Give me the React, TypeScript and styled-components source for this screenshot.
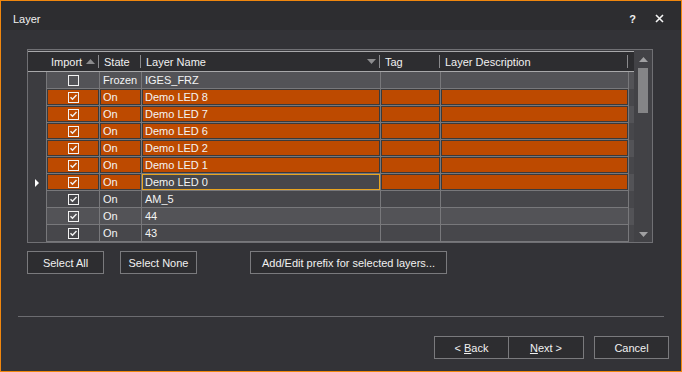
import React from 'react';
import styled, { createGlobalStyle } from 'styled-components';

const Global = createGlobalStyle`
  html, body { margin: 0; padding: 0; background: #333337; }
  body { font-family: "Liberation Sans", Arial, sans-serif; font-size: 11px; color: #f1f1f1; }
  * { box-sizing: border-box; }
`;

const Window = styled.div`
  width: 682px;
  height: 372px;
  border: 1px solid #f0870e;
  background: #333337;
  display: flex;
  flex-direction: column;
  overflow: hidden;
`;

const TitleBar = styled.div`
  height: 29px;
  flex-shrink: 0;
  background: #2d2d30;
  display: flex;
  align-items: center;
  padding: 6px 0 0 12px;
`;

const Title = styled.span`
  flex: 1;
  font-size: 11px;
  color: #f1f1f1;
`;

const TitleActions = styled.div`
  display: flex;
  align-items: center;
  gap: 19px;
  padding-right: 17px;
`;

const HelpGlyph = styled.span`
  font-size: 11px;
  font-weight: bold;
  color: #f1f1f1;
`;

const Body = styled.div`
  flex: 1;
  display: flex;
  flex-direction: column;
`;

const TopSection = styled.div`
  padding: 19px 0 0 26px;
  display: flex;
  flex-direction: column;
`;

const Grid = styled.div`
  width: 626px;
  height: 194px;
  border: 1px solid #707074;
  background: #3c3c40;
  display: flex;
  overflow: hidden;
`;

const Main = styled.div`
  width: 606px;
  display: flex;
  flex-direction: column;
`;

const HeaderRow = styled.div`
  margin-top: 1px;
  height: 21px;
  flex-shrink: 0;
  display: flex;
  background: #2d2d30;
  border-top: 1px solid #a8a8aa;
  border-bottom: 1px solid #a8a8aa;
`;

const HeaderCell = styled.div<{ $w: number; $sep?: boolean }>`
  position: relative;
  width: ${(p) => p.$w}px;
  flex-shrink: 0;
  display: flex;
  align-items: center;
  padding-left: 5px;
  white-space: nowrap;
  color: #f1f1f1;
  &::after {
    content: '';
    display: ${(p) => (p.$sep ? 'block' : 'none')};
    position: absolute;
    right: 0;
    top: 3px;
    bottom: 3px;
    width: 1px;
    background: #8a8a8d;
  }
`;

const HeaderArrow = styled.svg`
  margin-left: auto;
  margin-right: 4px;
  flex-shrink: 0;
`;

const Rows = styled.div`
  display: flex;
  flex-direction: column;
`;

const Row = styled.div<{ $alt: boolean }>`
  height: 17px;
  flex-shrink: 0;
  display: flex;
  background: ${(p) => (p.$alt ? '#47474b' : '#535357')};
`;

const RowHeader = styled.div`
  width: 19px;
  flex-shrink: 0;
  background: #3c3c40;
  border-right: 1px solid #78787b;
  display: flex;
  align-items: center;
  padding-left: 7px;
`;

const Cell = styled.div<{ $w: number; $sel?: boolean; $current?: boolean; $center?: boolean }>`
  width: ${(p) => p.$w}px;
  flex-shrink: 0;
  border-right: 1px solid #78787b;
  border-bottom: 1px solid #78787b;
  padding: 1px 3px 0;
  line-height: 15px;
  white-space: nowrap;
  overflow: hidden;
  color: #f4f4f4;
  display: flex;
  align-items: center;
  justify-content: ${(p) => (p.$center ? 'center' : 'flex-start')};
  background: ${(p) => (p.$current ? '#47474b' : p.$sel ? '#bd4a00' : 'transparent')};
  box-shadow: ${(p) =>
    p.$current ? 'inset 0 0 0 1px #e8a420' : p.$sel ? 'inset 0 0 0 1px #3a3a3c' : 'none'};
`;

const Scrollbar = styled.div`
  width: 18px;
  flex-shrink: 0;
  background: #424246;
  display: flex;
  flex-direction: column;
  align-items: center;
  padding: 7px 0 5px;
`;

const Thumb = styled.div`
  width: 10px;
  height: 45px;
  margin-top: 6px;
  background: #858587;
`;

const Spacer = styled.div`
  flex: 1;
`;

const ButtonRow = styled.div`
  display: flex;
  margin-top: 8px;
`;

const Button = styled.button<{ $w: number; $ml?: number }>`
  width: ${(p) => p.$w}px;
  height: 23px;
  margin-left: ${(p) => p.$ml ?? 0}px;
  padding: 0;
  border: 1px solid #7a7a7d;
  background: #2d2d30;
  color: #f1f1f1;
  font-family: "Liberation Sans", Arial, sans-serif;
  font-size: 11px;
  flex-shrink: 0;
`;

const Separator = styled.div`
  margin: 42px 17px 0;
  height: 1px;
  background: #6c6c70;
`;

const Footer = styled.div`
  display: flex;
  justify-content: flex-end;
  margin-top: 19px;
  padding-right: 12px;
`;

const CheckBox: React.FC<{ checked: boolean }> = ({ checked }) => (
  <svg width="11" height="11" viewBox="0 0 11 11">
    <rect x="0.5" y="0.5" width="10" height="10" fill="none" stroke="#f2f2f2" strokeWidth="1" />
    {checked && (
      <polyline points="2.5,5.2 4.5,7.3 8.5,3" fill="none" stroke="#f2f2f2" strokeWidth="1.4" />
    )}
  </svg>
);

type RowData = { checked: boolean; state: string; name: string; sel: boolean; current?: boolean };

const rows: RowData[] = [
  { checked: false, state: 'Frozen', name: 'IGES_FRZ', sel: false },
  { checked: true, state: 'On', name: 'Demo LED 8', sel: true },
  { checked: true, state: 'On', name: 'Demo LED 7', sel: true },
  { checked: true, state: 'On', name: 'Demo LED 6', sel: true },
  { checked: true, state: 'On', name: 'Demo LED 2', sel: true },
  { checked: true, state: 'On', name: 'Demo LED 1', sel: true },
  { checked: true, state: 'On', name: 'Demo LED 0', sel: true, current: true },
  { checked: true, state: 'On', name: 'AM_5', sel: false },
  { checked: true, state: 'On', name: '44', sel: false },
  { checked: true, state: 'On', name: '43', sel: false },
];

export default function App() {
  return (
    <>
      <Global />
      <Window>
        <TitleBar>
          <Title>Layer</Title>
          <TitleActions>
            <HelpGlyph>?</HelpGlyph>
            <svg width="9" height="9" viewBox="0 0 9 9">
              <path d="M1 1 L8 8 M8 1 L1 8" stroke="#f4f4f4" strokeWidth="1.6" />
            </svg>
          </TitleActions>
        </TitleBar>
        <Body>
          <TopSection>
            <Grid>
              <Main>
                <HeaderRow>
                  <HeaderCell $w={18} />
                  <HeaderCell $w={53} $sep>
                    Import
                    <HeaderArrow width="9" height="5" viewBox="0 0 9 5">
                      <polygon points="0,5 4.5,0 9,5" fill="#8c8c8e" />
                    </HeaderArrow>
                  </HeaderCell>
                  <HeaderCell $w={42} $sep>State</HeaderCell>
                  <HeaderCell $w={239} $sep>
                    Layer Name
                    <HeaderArrow width="9" height="5" viewBox="0 0 9 5">
                      <polygon points="0,0 9,0 4.5,5" fill="#8c8c8e" />
                    </HeaderArrow>
                  </HeaderCell>
                  <HeaderCell $w={60} $sep>Tag</HeaderCell>
                  <HeaderCell $w={188} $sep>Layer Description</HeaderCell>
                </HeaderRow>
                <Rows>
                  {rows.map((r, i) => (
                    <Row key={i} $alt={i % 2 === 1}>
                      <RowHeader>
                        {r.current && (
                          <svg width="4" height="8" viewBox="0 0 4 8">
                            <polygon points="0,0 4,4 0,8" fill="#ffffff" />
                          </svg>
                        )}
                      </RowHeader>
                      <Cell $w={53} $sel={r.sel} $center>
                        <CheckBox checked={r.checked} />
                      </Cell>
                      <Cell $w={42} $sel={r.sel}>{r.state}</Cell>
                      <Cell $w={239} $sel={r.sel} $current={r.current}>{r.name}</Cell>
                      <Cell $w={60} $sel={r.sel} />
                      <Cell $w={188} $sel={r.sel} />
                    </Row>
                  ))}
                </Rows>
              </Main>
              <Scrollbar>
                <svg width="9" height="5" viewBox="0 0 9 5">
                  <polygon points="0,5 4.5,0 9,5" fill="#a0a0a2" />
                </svg>
                <Thumb />
                <Spacer />
                <svg width="9" height="5" viewBox="0 0 9 5">
                  <polygon points="0,0 9,0 4.5,5" fill="#a0a0a2" />
                </svg>
              </Scrollbar>
            </Grid>
            <ButtonRow>
              <Button $w={77}>Select All</Button>
              <Button $w={77} $ml={16}>Select None</Button>
              <Button $w={197} $ml={53}>Add/Edit prefix for selected layers...</Button>
            </ButtonRow>
          </TopSection>
          <Separator />
          <Footer>
            <Button $w={75}>
              &lt; <u>B</u>ack
            </Button>
            <Button $w={76} $ml={-1}>
              <u>N</u>ext &gt;
            </Button>
            <Button $w={75} $ml={10}>Cancel</Button>
          </Footer>
        </Body>
      </Window>
    </>
  );
}
